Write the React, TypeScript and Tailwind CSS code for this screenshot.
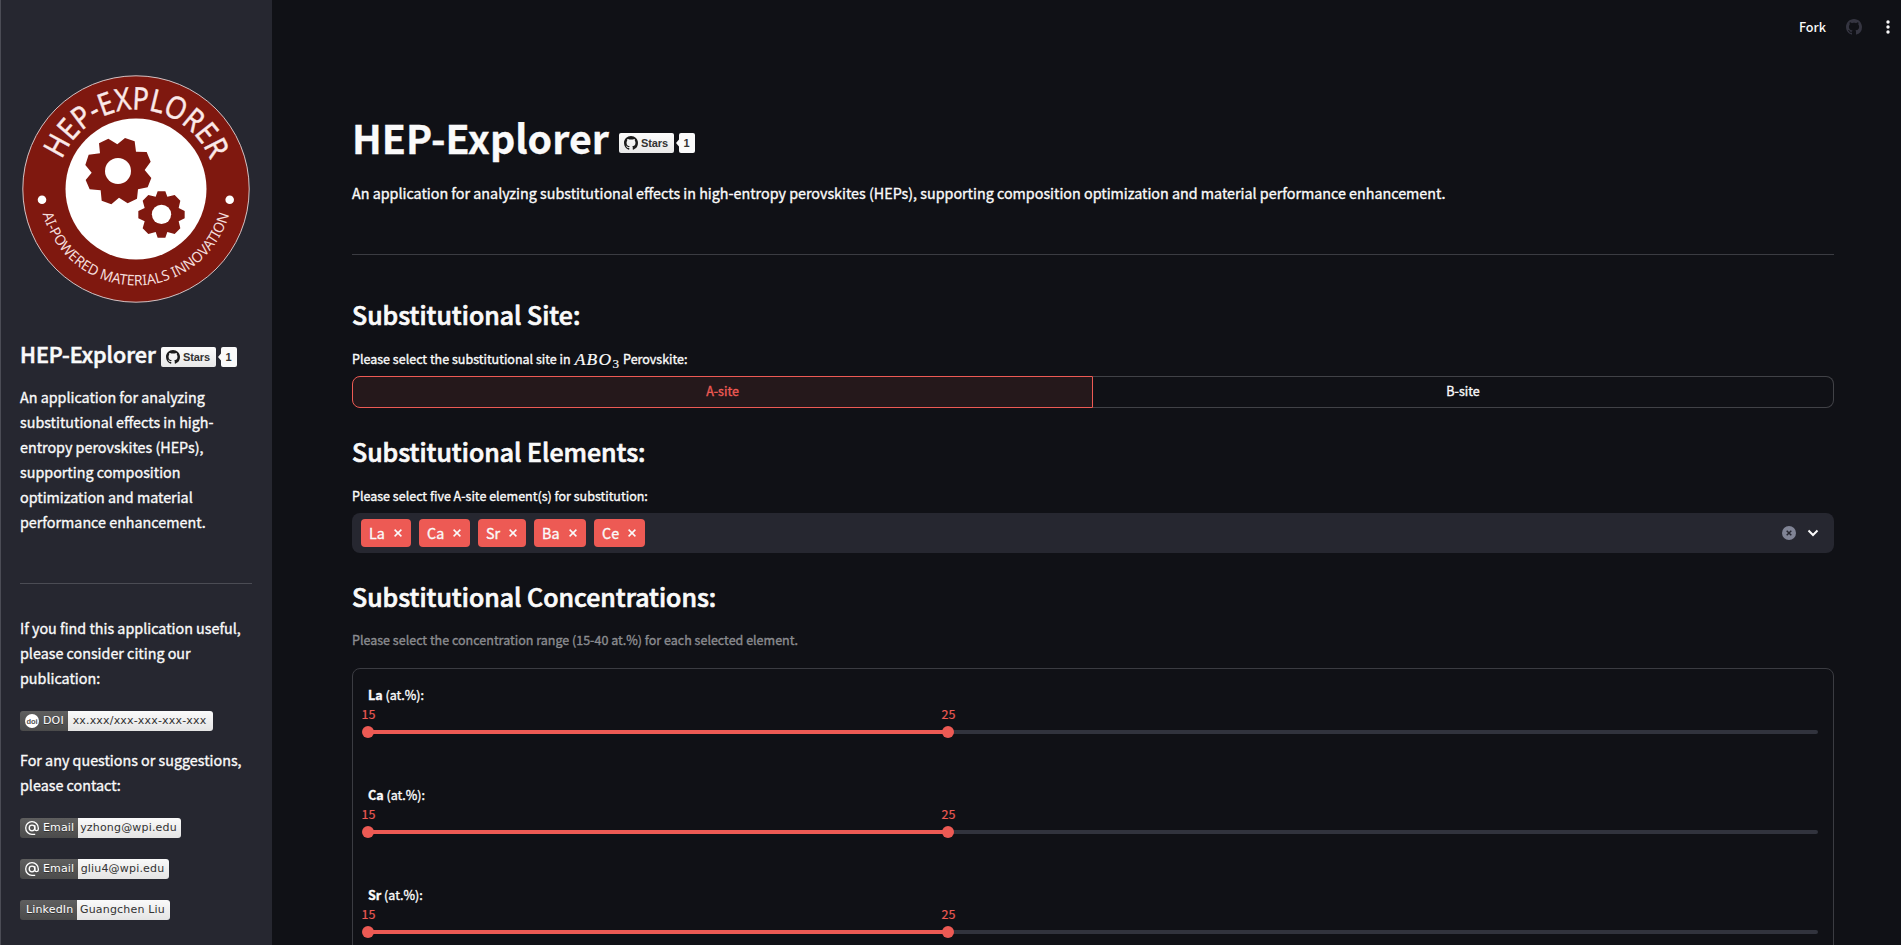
import React from "react";

const SANS = "font-['Noto_Sans_CJK_SC',sans-serif]";

function OctocatMark({ className }: { className: string }) {
  return (
    <svg viewBox="0 0 16 16" fill="currentColor" className={className}>
      <path d="M8 0C3.58 0 0 3.58 0 8c0 3.54 2.29 6.53 5.47 7.59.4.07.55-.17.55-.38 0-.19-.01-.82-.01-1.49-2.01.37-2.53-.49-2.69-.94-.09-.23-.48-.94-.82-1.13-.28-.15-.68-.52-.01-.53.63-.01 1.08.58 1.23.82.72 1.21 1.87.87 2.33.66.07-.52.28-.87.51-1.07-1.78-.2-3.64-.89-3.64-3.95 0-.87.31-1.59.82-2.15-.08-.2-.36-1.02.08-2.12 0 0 .67-.21 2.2.82.64-.18 1.32-.27 2-.27s1.36.09 2 .27c1.53-1.04 2.2-.82 2.2-.82.44 1.1.16 1.92.08 2.12.51.56.82 1.27.82 2.15 0 3.07-1.87 3.75-3.65 3.95.29.25.54.73.54 1.48 0 1.07-.01 1.93-.01 2.2 0 .21.15.46.55.38A8.01 8.01 0 0 0 16 8c0-4.42-3.58-8-8-8z" />
    </svg>
  );
}

function StarsBadge() {
  return (
    <div className="flex h-5 items-stretch font-['Liberation_Sans',sans-serif] text-[11px] font-bold text-[#333]">
      <div className="flex w-[55px] items-center gap-[3px] rounded-[2px] bg-linear-to-b from-[#fcfcfc] to-[#e8e8e8] pl-[5px]">
        <OctocatMark className="size-3.5 text-[#1b1b1b]" />
        <span className="leading-5 tracking-[-0.1px]">Stars</span>
      </div>
      <svg viewBox="0 0 5 20" className="h-5 w-[5px]">
        <path d="M5 6.5L2 10L5 13.5Z" fill="#fafafa" />
      </svg>
      <div className="w-4 rounded-[2px] bg-[#fafafa] pr-px text-center leading-5">1</div>
    </div>
  );
}

function Logo() {
  return (
    <svg viewBox="0 0 228 228" className="size-[228px]">
      <defs>
        <path id="arc-top" d="M34.500 114A79.500 79.500 0 0 1 193.500 114" />
        <path id="arc-bottom" d="M17.5 114A96.5 96.5 0 0 0 210.5 114" />
      </defs>
      <circle cx="114" cy="114" r="113.2" fill="#7f180f" stroke="#d5c3c4" strokeWidth="1" />
      <circle cx="114" cy="114" r="70.5" fill="#fff" />
      <circle cx="20" cy="124.7" r="4.3" fill="#fff" />
      <circle cx="207.7" cy="124.7" r="4.3" fill="#fff" />
      <text fill="#fbe9e8" stroke="#fbe9e8" strokeWidth="0.400" fontSize="31" className="font-['Noto_Sans',sans-serif]">
        <textPath href="#arc-top" startOffset="30" textLength="190" lengthAdjust="spacingAndGlyphs">HEP-EXPLORER</textPath>
      </text>
      <text fill="#f3dcdb" fontSize="14.500" className="font-['Noto_Sans',sans-serif]">
        <textPath href="#arc-bottom" startOffset="25" textLength="252" lengthAdjust="spacingAndGlyphs">AI-POWERED MATERIALS INNOVATION</textPath>
      </text>
      <g transform="translate(-22 -15) scale(0.33333)" fill="#7f180f">
        <path d="M297 250L325 236L352 253L375 234L404 244L408 275L440 276L452 305L434 330L454 354L443 382L414 388L411 416L383 430L357 413L334 433L305 422L302 391L269 388L257 360L275 338L256 315L266 284L300 280Z" />
        <circle cx="354" cy="333" r="39" fill="#fff" />
        <path d="M473 394H496L502 410L524 405L541 422L536 444L554 453V475L536 484L541 505L524 522L502 516L496 533H473L467 516L445 522L428 505L434 484L415 475V453L434 444L428 422L445 405L467 410Z" />
        <circle cx="484.500" cy="463" r="29" fill="#fff" />
      </g>
    </svg>
  );
}

function Shield({ icon, label, value, labelWidth, width }: { icon?: React.ReactNode; label: string; value: string; labelWidth: string; width: string }) {
  return (
    <div className={`flex h-5 overflow-hidden rounded-[3px] font-['DejaVu_Sans',sans-serif] text-[11px] leading-5 ${width}`}>
      <div className={`flex shrink-0 items-center gap-1 bg-linear-to-b from-[#5f5f5f] to-[#4b4b4b] tracking-[0.150px] text-white [text-shadow:0_1px_0_#333] ${icon ? "pl-[5px]" : "pl-1.5"} ${labelWidth}`}>
        {icon}
        <span>{label}</span>
      </div>
      <div className="flex-1 bg-linear-to-b from-[#fafafa] to-[#e4e4e4] pr-0.5 text-center tracking-[0.180px] text-[#333]">{value}</div>
    </div>
  );
}

function AtIcon() {
  return (
    <svg viewBox="0 0 24 24" className="size-3.5 shrink-0" fill="none" stroke="#fff" strokeWidth="2.3">
      <circle cx="12" cy="12" r="4.800" />
      <path d="M16.800 7.200V13.500A3 3 0 0 0 22.800 13.500V12A10.800 10.800 0 1 0 12 22.800H17.500" />
    </svg>
  );
}

function DoiIcon() {
  return (
    <svg viewBox="0 0 14 14" className="size-3.5 shrink-0 tracking-normal [text-shadow:none]">
      <circle cx="7" cy="7" r="7" fill="#fff" />
      <text x="7" y="9.600" textAnchor="middle" fontSize="7.500" fontWeight="700" fill="#555" className="font-['Liberation_Sans',sans-serif]">doi</text>
    </svg>
  );
}

const BODY = "text-[14.320px] leading-[25px] font-normal whitespace-nowrap [-webkit-text-stroke:0.35px]";
const LABEL = "text-[12.530px] leading-5 font-normal whitespace-nowrap [-webkit-text-stroke:0.35px]";
const H2 = "text-[24.900px] leading-[34px] font-medium whitespace-nowrap [-webkit-text-stroke:0.7px]";

function Sidebar() {
  return (
    <aside className="flex h-full w-[272px] shrink-0 flex-col border-l border-[#4b4c55] bg-[#262730] pl-[19px] text-[#fafafa]">
      <div className="mt-[75px] ml-0.5 h-[228px] shrink-0"><Logo /></div>
      <div className="mt-[37px] flex h-7 shrink-0 items-center">
        <h3 className="w-[141px] shrink-0 text-[21.500px] leading-7 font-medium whitespace-nowrap [-webkit-text-stroke:0.6px]">HEP-Explorer</h3>
        <div className="mt-[6px]"><StarsBadge /></div>
      </div>
      <p className={`mt-4 ${BODY}`}>
        An application for analyzing<br />substitutional effects in high-<br />entropy perovskites (HEPs),<br />supporting composition<br />optimization and material<br />performance enhancement.
      </p>
      <div className="mt-[49px] h-px w-[232px] shrink-0 bg-[#4b4c54]" />
      <p className={`mt-[31px] ${BODY}`}>
        If you find this application useful,<br />please consider citing our<br />publication:
      </p>
      <div className="mt-[21px]"><Shield icon={<DoiIcon />} label="DOI" value="xx.xxx/xxx-xxx-xxx-xxx" labelWidth="w-12" width="w-[193px]" /></div>
      <p className={`mt-4 ${BODY}`}>
        For any questions or suggestions,<br />please contact:
      </p>
      <div className="mt-[21px] flex flex-col gap-[21px]">
        <Shield icon={<AtIcon />} label="Email" value="yzhong@wpi.edu" labelWidth="w-[58px]" width="w-[161px]" />
        <Shield icon={<AtIcon />} label="Email" value="gliu4@wpi.edu" labelWidth="w-[58px]" width="w-[149px]" />
        <Shield label="LinkedIn" value="Guangchen Liu" labelWidth="w-[57px]" width="w-[150px]" />
      </div>
    </aside>
  );
}

function Header() {
  return (
    <header className="flex h-[53px] shrink-0 items-center justify-end pr-2 text-[#fafafa]">
      <span className="text-[12.600px] leading-5 font-medium">Fork</span>
      <OctocatMark className="ml-5 size-4 text-[#353541]" />
      <svg viewBox="0 0 10 16" className="ml-[21px] h-4 w-2.5" fill="#fafafa">
        <circle cx="5" cy="3" r="1.700" /><circle cx="5" cy="8" r="1.700" /><circle cx="5" cy="13" r="1.700" />
      </svg>
    </header>
  );
}

function Tag({ name, width }: { name: string; width: string }) {
  return (
    <span className={`flex h-7 items-center justify-between rounded bg-[#ed5a54] px-2 text-[14.320px] leading-7 font-normal [-webkit-text-stroke:0.35px] ${width}`}>
      {name}
      <svg viewBox="0 0 10 10" className="size-2.5" stroke="#fafafa" strokeWidth="1.500"><path d="M1.600 1.600L8.400 8.400M8.400 1.600L1.600 8.400" /></svg>
    </span>
  );
}

function RangeSlider({ element, low, high }: { element: string; low: number; high: number }) {
  const at = (v: number) => `${((v - 15) / 25) * 100}%`;
  return (
    <div className="h-[100px]">
      <div className={LABEL}><b>{element}</b> (at.%):</div>
      <div className="relative mt-[25px] h-1 rounded-full bg-[#31333d]">
        <div className="h-1 bg-[#ed5a54]" style={{ width: at(high) }} />
        {[low, high].map((v) => (
          <div key={v} className="absolute top-1/2 flex size-3 -translate-x-1/2 -translate-y-1/2 justify-center rounded-full bg-[#ed5a54]" style={{ left: at(v) }}>
            <span className="absolute bottom-[14px] -left-[0.500px] text-[12.530px] leading-5 text-[#ed5a54] [-webkit-text-stroke:0.2px]">{v}</span>
          </div>
        ))}
      </div>
    </div>
  );
}

export default function App() {
  return (
    <div className={`flex h-[945px] w-[1901px] overflow-hidden bg-[#101116] text-[#fafafa] ${SANS}`}>
      <Sidebar />
      <div className="flex flex-1 flex-col">
        <Header />
        <main className="ml-20 flex w-[1482px] flex-col">
          <div className="mt-[57px] flex h-[54px] items-center">
            <h1 className="w-[267px] shrink-0 text-[39.300px] leading-[54px] font-bold whitespace-nowrap [-webkit-text-stroke:0.3px]">HEP-Explorer</h1>
            <div className="mt-[12px]"><StarsBadge /></div>
          </div>
          <p className={`mt-[16px] ${BODY}`}>
            An application for analyzing substitutional effects in high-entropy perovskites (HEPs), supporting composition optimization and material performance enhancement.
          </p>
          <div className="mt-[49px] h-px bg-[#3b3c42]" />
          <h2 className={`mt-[42px] ${H2}`}>Substitutional Site:</h2>
          <div className={`mt-[18px] flex ${LABEL}`}>
            Please select the substitutional site in
            <span className="mr-[4px] ml-[4px] font-['Liberation_Serif',serif] text-[17.500px] font-normal tracking-[1.300px] italic [-webkit-text-stroke:0.2px]">ABO<sub className="text-[13px] tracking-normal not-italic">3</sub></span>
            Perovskite:
          </div>
          <div className="mt-[7px] flex h-8 text-[12.530px] leading-7 font-normal [-webkit-text-stroke:0.35px]">
            <div className="w-[741px] rounded-l-lg border border-[#ed5a54] bg-[#25181b] text-center text-[#ed5a54]">A-site</div>
            <div className="flex-1 rounded-r-lg border border-l-0 border-[#414247] text-center">B-site</div>
          </div>
          <h2 className={`mt-[26px] ${H2}`}>Substitutional Elements:</h2>
          <div className={`mt-[18px] ${LABEL}`}>Please select five A-site element(s) for substitution:</div>
          <div className="mt-[7px] flex h-10 items-center gap-2 rounded-lg bg-[#262730] pl-[9px]">
            <Tag name="La" width="w-[50px]" />
            <Tag name="Ca" width="w-[51px]" />
            <Tag name="Sr" width="w-[48px]" />
            <Tag name="Ba" width="w-[52px]" />
            <Tag name="Ce" width="w-[51px]" />
            <svg viewBox="0 0 14 14" className="ml-auto size-3.5">
              <circle cx="7" cy="7" r="7" fill="#808495" />
              <path d="M4.700 4.700L9.300 9.300M9.300 4.700L4.700 9.300" stroke="#262730" strokeWidth="1.500" />
            </svg>
            <svg viewBox="0 0 12 8" className="mr-[15px] ml-[3px] h-2 w-3" fill="none" stroke="#fafafa" strokeWidth="2"><path d="M1.500 1.500L6 6L10.500 1.500" /></svg>
          </div>
          <h2 className={`mt-[26px] ${H2}`}>Substitutional Concentrations:</h2>
          <div className={`mt-[17px] text-[#8b8c90] ${LABEL}`}>Please select the concentration range (15-40 at.%) for each selected element.</div>
          <section className="mt-[18px] h-[540px] rounded-lg border border-[#3b3c42] px-[15px] pt-4">
            <RangeSlider element="La" low={15} high={25} />
            <RangeSlider element="Ca" low={15} high={25} />
            <RangeSlider element="Sr" low={15} high={25} />
          </section>
        </main>
      </div>
    </div>
  );
}
